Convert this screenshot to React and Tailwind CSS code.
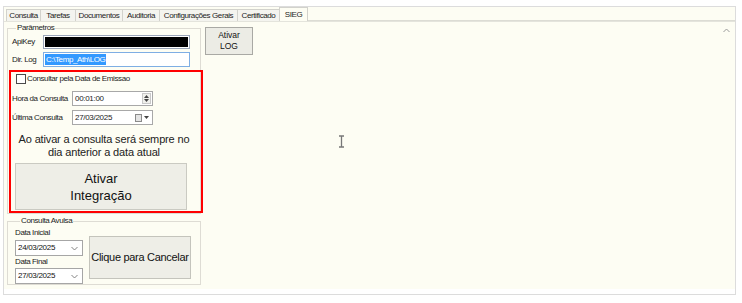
import React from "react";

const tabs = [
    { label: "Consulta", w: "w-[34px]" },
    { label: "Tarefas", w: "w-[35px]" },
    { label: "Documentos", w: "w-[47px]" },
    { label: "Auditoria", w: "w-[37px]" },
    { label: "Configurações Gerais", w: "w-[78px]" },
    { label: "Certificado", w: "w-[42px]" },
];

function DateCombo({ value }) {
    return (
        <div className="flex items-center justify-between w-[68px] h-[16px] border border-[#a6a6a6] bg-white pl-[2px] pr-[4px]">
            <span className="text-[8px] tracking-[-0.3px] leading-none text-[#111]">{value}</span>
            <svg width="7" height="5" viewBox="0 0 7 5">
                <path d="M0.5 1 L3.5 4 L6.5 1" fill="none" stroke="#777" strokeWidth="0.9" />
            </svg>
        </div>
    );
}

export default function App() {
    return (
        <div className="w-[742px] h-[303px] bg-white pt-[6px] pl-[3px] font-['Liberation_Sans',Arial,sans-serif] text-[#1c1c1c]">
            <div className="relative w-[733px] h-[289px] border border-[#dcdcdc] bg-[#fdfdf3] flex flex-col">
                {/* tab strip */}
                <div className="flex items-end h-[14px] pl-[2px]">
                    {tabs.map((t) => (
                        <div
                            key={t.label}
                            className={`${t.w} h-[12px] border border-b-0 border-r-0 border-[#d2d2cc] bg-[#f4f4ef] flex items-center justify-center text-[8px] tracking-[-0.4px] leading-none whitespace-nowrap`}
                        >
                            {t.label}
                        </div>
                    ))}
                    <div className="w-[29px] h-[14px] border border-b-0 border-[#d2d2cc] bg-[#fdfdf3] flex items-center justify-center text-[8px] tracking-[-0.4px] leading-none">
                        SIEG
                    </div>
                    <div className="flex-1 border-b border-[#dcdcd4]" />
                </div>

                {/* panel */}
                <div className="flex-1 flex border-t border-[#e4e4dc] pl-[3px]">
                    <div className="relative w-[194px] flex flex-col">
                        <fieldset className="border border-[#dedcd4] mt-[1px] h-[191px] pl-[4px]">
                            <legend className="ml-[4px] px-[1px] text-[8px] tracking-[-0.4px] leading-[10px]">Parâmetros</legend>
                            <div className="flex items-center mt-[2px] h-[14px]">
                                <span className="w-[31px] text-[8px] tracking-[-0.4px] whitespace-nowrap">ApiKey</span>
                                <div className="w-[147px] h-[14px] border border-[#9aa5b8] bg-white p-[1px]">
                                    <div className="w-full h-full bg-black" />
                                </div>
                            </div>
                            <div className="flex items-center mt-[3px] h-[15px]">
                                <span className="w-[31px] text-[8px] tracking-[-0.4px] whitespace-nowrap">Dir. Log</span>
                                <div className="w-[147px] h-[15px] border border-[#7eaee4] bg-white flex items-center pl-[1px]">
                                    <span className="bg-[#3399ff] text-white text-[8px] tracking-[-0.4px] leading-[11px] px-[1px]">C:\Temp_Ath\LOG</span>
                                </div>
                            </div>
                            <div className="flex items-center mt-[7px] pl-[4px] h-[10px]">
                                <div className="w-[10px] h-[10px] border border-[#4a4a4a] bg-white" />
                                <span className="ml-[1px] text-[8px] tracking-[-0.4px] whitespace-nowrap">Consultar pela Data de Emissao</span>
                            </div>
                            <div className="flex items-center mt-[7px] h-[15px]">
                                <span className="w-[60px] text-[8px] tracking-[-0.4px] whitespace-nowrap">Hora da Consulta</span>
                                <div className="w-[81px] h-[15px] border border-[#a8a8a8] bg-white flex items-center justify-between pl-[2px] pr-[1px]">
                                    <span className="text-[8px] tracking-[-0.3px] leading-none">00:01:00</span>
                                    <div className="w-[9px] h-[11px] border border-[#c8c8c8] bg-[#f0f0ec] flex flex-col items-center justify-center gap-[1px]">
                                        <svg width="5" height="3" viewBox="0 0 5 3"><path d="M0 3 L2.5 0 L5 3Z" fill="#444" /></svg>
                                        <svg width="5" height="3" viewBox="0 0 5 3"><path d="M0 0 L2.5 3 L5 0Z" fill="#444" /></svg>
                                    </div>
                                </div>
                            </div>
                            <div className="flex items-center mt-[4px] h-[15px]">
                                <span className="w-[60px] text-[8px] tracking-[-0.4px] whitespace-nowrap">Última Consulta</span>
                                <div className="w-[81px] h-[15px] border border-[#a8a8a8] bg-white flex items-center justify-between pl-[2px] pr-[3px]">
                                    <span className="text-[8px] tracking-[-0.3px] leading-none">27/03/2025</span>
                                    <div className="flex items-center gap-[2px]">
                                        <div className="w-[7px] h-[8px] border border-[#8a8a8a] bg-[#e4e4e4]" />
                                        <svg width="5" height="3" viewBox="0 0 5 3"><path d="M0 0 L2.5 3 L5 0Z" fill="#444" /></svg>
                                    </div>
                                </div>
                            </div>
                            <div className="mt-[8px] text-center text-[11px] tracking-[-0.15px] leading-[12.5px] text-[#222] pr-[4px] whitespace-nowrap">
                                Ao ativar a consulta será sempre no
                                <br />
                                dia anterior a data atual
                            </div>
                            <button className="mt-[5px] ml-[3px] w-[172px] h-[47px] border border-[#cacac2] bg-[#eeeee7] text-[13px] leading-[17px] text-[#111]">
                                Ativar
                                <br />
                                Integração
                            </button>
                        </fieldset>

                        <fieldset className="border border-[#dedcd4] mt-[2px] h-[69px] pl-[7px]">
                            <legend className="ml-[5px] px-[1px] text-[8px] tracking-[-0.4px] leading-[10px]">Consulta Avulsa</legend>
                            <div className="flex">
                                <div className="flex flex-col w-[74px]">
                                    <span className="text-[8px] tracking-[-0.4px] leading-[10px] mt-[2px]">Data Inicial</span>
                                    <div className="mt-[2px]">
                                        <DateCombo value="24/03/2025" />
                                    </div>
                                    <span className="text-[8px] tracking-[-0.4px] leading-[10px] mt-[1px]">Data Final</span>
                                    <div className="mt-[1px]">
                                        <DateCombo value="27/03/2025" />
                                    </div>
                                </div>
                                <button className="mt-[10px] w-[102px] h-[43px] border border-[#c4c4bc] bg-[#eeeee7] text-[11px] tracking-[-0.3px] text-[#111] whitespace-nowrap">
                                    Clique para Cancelar
                                </button>
                            </div>
                        </fieldset>

                        {/* red highlight */}
                        <div className="absolute left-[2px] top-[48px] w-[194px] h-[143px] border-2 border-[#ff0000]" />
                    </div>

                    <div className="ml-[4px] mt-[5px]">
                        <button className="w-[48px] h-[28px] border border-[#a9a9a4] bg-[#ecece5] text-[8.5px] leading-[11px] text-[#111]">
                            Ativar
                            <br />
                            LOG
                        </button>
                    </div>

                    <div className="flex-1 flex justify-end pr-[5px] pt-[6px]">
                        <svg width="7" height="5" viewBox="0 0 7 5">
                            <path d="M0.5 4 L3.5 1 L6.5 4" fill="none" stroke="#999" strokeWidth="1" />
                        </svg>
                    </div>
                </div>

                <div className="h-[5px] bg-white" />

                {/* text cursor */}
                <svg className="absolute left-[334px] top-[128px]" width="7" height="13" viewBox="0 0 7 13">
                    <path d="M1 1 H6 M3.5 1 V12 M1 12 H6" stroke="#777" strokeWidth="1.3" fill="none" />
                </svg>
            </div>
        </div>
    );
}
